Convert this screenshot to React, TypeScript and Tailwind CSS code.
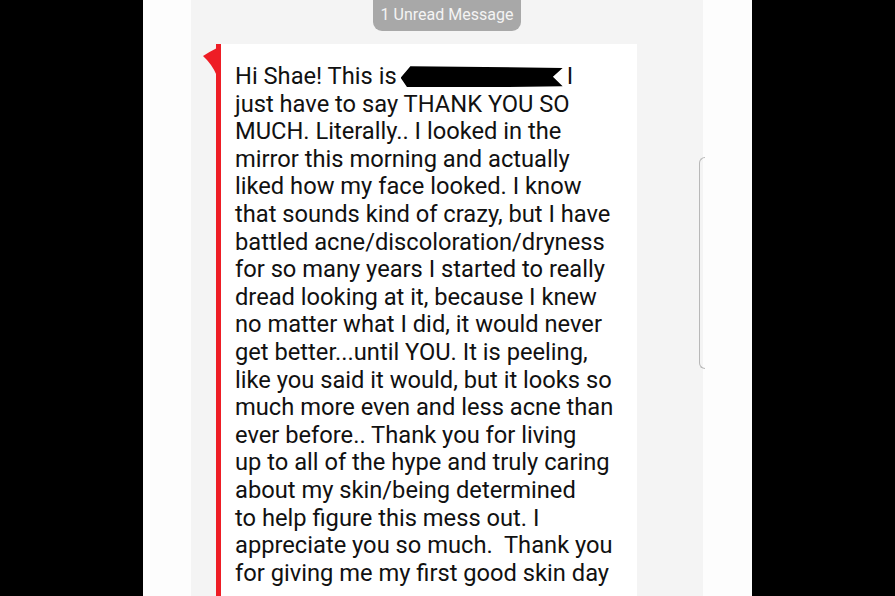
const lines: string[] = [
  "just have to say THANK YOU SO",
  "MUCH. Literally.. I looked in the",
  "mirror this morning and actually",
  "liked how my face looked. I know",
  "that sounds kind of crazy, but I have",
  "battled acne/discoloration/dryness",
  "for so many years I started to really",
  "dread looking at it, because I knew",
  "no matter what I did, it would never",
  "get better...until YOU. It is peeling,",
  "like you said it would, but it looks so",
  "much more even and less acne than",
  "ever before.. Thank you for living",
  "up to all of the hype and truly caring",
  "about my skin/being determined",
  "to help figure this mess out. I",
  "appreciate you so much.  Thank you",
  "for giving me my first good skin day",
];

function Redaction() {
  return (
    <span className="inline-block align-middle w-[162px] h-[21px] ml-[4px] mr-[4px] -mt-[2px] bg-black [clip-path:polygon(0_55%,6%_0,100%_8%,94%_50%,100%_95%,60%_100%,4%_100%)]" />
  );
}

function Bubble() {
  return (
    <div className="relative ml-[25px] mt-[13px] w-[421px] flex">
      <svg
        className="absolute left-[-13px] top-[4px]"
        width="14"
        height="30"
        viewBox="0 0 14 30"
      >
        <path d="M0 8 Q6 4 14 0 L14 28 Q9 16 0 8 Z" fill="#ee1d25" />
      </svg>
      <div className="w-[5px] bg-[#ee1d25] shrink-0" />
      <div className="flex-1 bg-white pl-[14px] pt-[19px] pb-[20px] text-[23.7px] leading-[27.6px] text-[#111] font-['Roboto',sans-serif]">
        <div className="whitespace-nowrap">
          Hi Shae! This is
          <Redaction />I
        </div>
        {lines.map((l, i) => (
          <div key={i} className="whitespace-pre">
            {l}
          </div>
        ))}
      </div>
    </div>
  );
}

export default function App() {
  return (
    <div className="w-[895px] h-[596px] overflow-hidden flex bg-black">
      <div className="w-[143px] shrink-0 bg-black" />
      <div className="w-[48px] shrink-0 bg-[#fdfdfd]" />
      <div className="w-[512px] shrink-0 bg-[#f4f4f4] flex flex-col">
        <div className="flex justify-center">
          <div className="h-[31px] w-[148px] pb-[2px] rounded-b-[9px] bg-[#a8a8a8] flex items-center justify-center text-[16px] text-[#f4f4f4] font-['Roboto',sans-serif]">
            1 Unread Message
          </div>
        </div>
        <Bubble />
      </div>
      <div className="w-[49px] shrink-0 bg-[#fdfdfd] pt-[157px]">
        <div className="w-[6px] h-[212px] border-l border-t border-b border-[#b8b8b8] rounded-l-[6px] -ml-[4px]" />
      </div>
      <div className="flex-1 bg-black" />
    </div>
  );
}
